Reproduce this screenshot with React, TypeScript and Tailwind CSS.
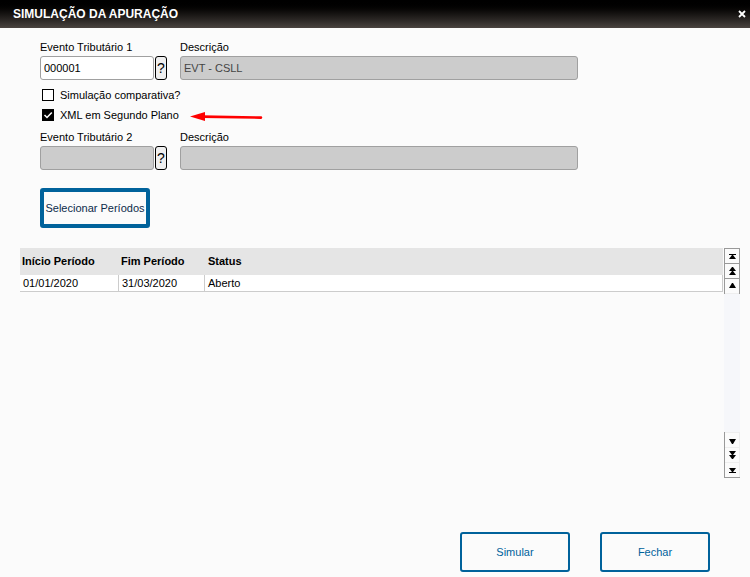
import { useState } from "react";

type Periodo = {
  inicio: string;
  fim: string;
  status: string;
};

const periodos: Periodo[] = [
  { inicio: "01/01/2020", fim: "31/03/2020", status: "Aberto" },
];

type EventoProps = {
  numero: number;
  codigo: string;
  descricao: string;
  disabled?: boolean;
};

function EventoTributario({ numero, codigo, descricao, disabled }: EventoProps) {
  const [valor, setValor] = useState(codigo);

  return (
    <div className="flex gap-3">
      <div className="w-32">
        <label htmlFor={`evento-${numero}`} className="block h-4 leading-[14px]">
          Evento Tributário {numero}
        </label>
        <div className="flex gap-px">
          <input
            id={`evento-${numero}`}
            value={valor}
            onChange={(e) => setValor(e.target.value)}
            disabled={disabled}
            className="h-6 w-[114px] rounded-[3px] border border-[#a0a0a0] bg-white px-[3px] disabled:bg-[#cccccc]"
          />
          <button
            type="button"
            aria-label={`Pesquisar evento ${numero}`}
            className="flex h-6 w-3 items-center justify-center rounded-[3px] border border-black bg-[#efefef] text-sm leading-none"
          >
            ?
          </button>
        </div>
      </div>
      <div className="w-full max-w-[398px]">
        <label htmlFor={`descricao-${numero}`} className="block h-4 leading-[14px]">
          Descrição
        </label>
        <input
          id={`descricao-${numero}`}
          value={descricao}
          disabled
          className="h-6 w-full rounded-[3px] border border-[#a0a0a0] bg-[#cccccc] px-[3px] text-[#444444]"
        />
      </div>
    </div>
  );
}

type OpcaoProps = {
  label: string;
  defaultChecked?: boolean;
};

function Opcao({ label, defaultChecked }: OpcaoProps) {
  return (
    <label className="flex h-5 items-center gap-1.5 pl-0.5">
      <span className="grid size-3">
        <input
          type="checkbox"
          defaultChecked={defaultChecked}
          className="peer col-start-1 row-start-1 size-3 appearance-none border border-black bg-white checked:bg-black"
        />
        <svg
          viewBox="0 0 12 12"
          className="pointer-events-none invisible col-start-1 row-start-1 size-3 peer-checked:visible"
        >
          <path d="M2.5 6 L5 8.5 L9.8 3.4" fill="none" stroke="white" strokeWidth="1.5" />
        </svg>
      </span>
      {label}
    </label>
  );
}

function Seta() {
  return (
    <svg width="73" height="16" viewBox="0 0 73 16" aria-hidden="true">
      <path d="M0 9.6 L15 5 V14 Z" fill="#ff0000" />
      <path d="M12 9.6 L71 10.6" stroke="#ff0000" strokeWidth="2.6" strokeLinecap="round" />
    </svg>
  );
}

const rolagemCima = [
  { nome: "Primeiro", d: "M1 2h7v1H1z M4 3h1l3 4H1z" },
  { nome: "Página anterior", d: "M4 0h1l3 4H1z M4 4h1l3 4H1z" },
  { nome: "Anterior", d: "M4 1h1l3 5H1z" },
];

const rolagemBaixo = [
  { nome: "Próximo", d: "M1 3h7L5 8H4z" },
  { nome: "Próxima página", d: "M1 0h7L5 4H4z M1 4h7L5 8H4z" },
  { nome: "Último", d: "M1 2h7L5 6H4z M1 6h7v1H1z" },
];

function Rolagem() {
  return (
    <div className="flex w-4 flex-col justify-between bg-[#f6f7fa]">
      <div className="border-t border-r border-l border-[#999999]">
        {rolagemCima.map((item) => (
          <button
            key={item.nome}
            type="button"
            aria-label={item.nome}
            className="flex h-[15px] w-full items-center justify-center border-b border-[#999999] bg-[#fbfbfb] pl-px last:border-[#eeeeee]"
          >
            <svg width="9" height="8" viewBox="0 0 9 8">
              <path d={item.d} />
            </svg>
          </button>
        ))}
      </div>
      <div className="border-b border-l border-[#999999]">
        {rolagemBaixo.map((item) => (
          <button
            key={item.nome}
            type="button"
            aria-label={item.nome}
            className="flex h-[15px] w-full items-center justify-center border-t border-r border-[#eeeeee] bg-[#fbfbfb]"
          >
            <svg width="9" height="8" viewBox="0 0 9 8">
              <path d={item.d} />
            </svg>
          </button>
        ))}
      </div>
    </div>
  );
}

function App() {
  return (
    <div className="flex min-h-screen flex-col bg-[#fbfbfb] font-['Liberation_Sans',Arial,sans-serif] text-[11px] text-black">
      <header className="flex h-7 items-center justify-between bg-linear-to-b from-black to-[#4a4440] pr-1 pl-[13px] text-white">
        <h1 className="text-xs font-bold">SIMULAÇÃO DA APURAÇÃO</h1>
        <button type="button" aria-label="Fechar janela">
          <svg width="8" height="8" viewBox="0 0 8 8">
            <path d="M1 1 L7 7 M7 1 L1 7" stroke="white" strokeWidth="1.8" />
          </svg>
        </button>
      </header>

      <form className="px-10 pt-3" onSubmit={(e) => e.preventDefault()}>
        <EventoTributario numero={1} codigo="000001" descricao="EVT - CSLL" />
        <div className="py-[5px]">
          <Opcao label="Simulação comparativa?" />
          <div className="flex items-center gap-[11px]">
            <Opcao label="XML em Segundo Plano" defaultChecked />
            <Seta />
          </div>
        </div>
        <EventoTributario numero={2} codigo="" descricao="" disabled />
        <button
          type="button"
          className="mt-[18px] block h-10 w-[110px] rounded-[3px] border-4 border-[#00629b] whitespace-nowrap text-[#0c2a4a]"
        >
          Selecionar Períodos
        </button>
      </form>

      <section className="mt-5 flex h-[230px] gap-px pr-2.5 pl-5">
        <div className="flex-1">
          <table className="w-full table-fixed border-separate border-spacing-0 text-left">
            <thead className="bg-[#e5e5e5]">
              <tr className="h-[27px]">
                <th className="w-[99px] px-0.5">Início Período</th>
                <th className="w-[86px] px-0.5">Fim Período</th>
                <th className="px-[3px]">Status</th>
              </tr>
            </thead>
            <tbody>
              {periodos.map((periodo) => (
                <tr key={periodo.inicio} className="h-[17px] bg-white leading-4">
                  <td className="border-r border-b border-[#cccccc] px-[3px]">{periodo.inicio}</td>
                  <td className="border-r border-b border-[#cccccc] px-[3px]">{periodo.fim}</td>
                  <td className="border-r border-b border-[#cccccc] px-[3px]">{periodo.status}</td>
                </tr>
              ))}
            </tbody>
          </table>
        </div>
        <Rolagem />
      </section>

      <footer className="mt-auto flex justify-end gap-[30px] px-10 pt-5 pb-[5px]">
        <button
          type="button"
          className="h-10 w-[110px] rounded-[3px] border-2 border-[#00629b] text-[#00629b]"
        >
          Simular
        </button>
        <button
          type="button"
          className="h-10 w-[110px] rounded-[3px] border-2 border-[#00629b] text-[#00629b]"
        >
          Fechar
        </button>
      </footer>
    </div>
  );
}

export default App;
